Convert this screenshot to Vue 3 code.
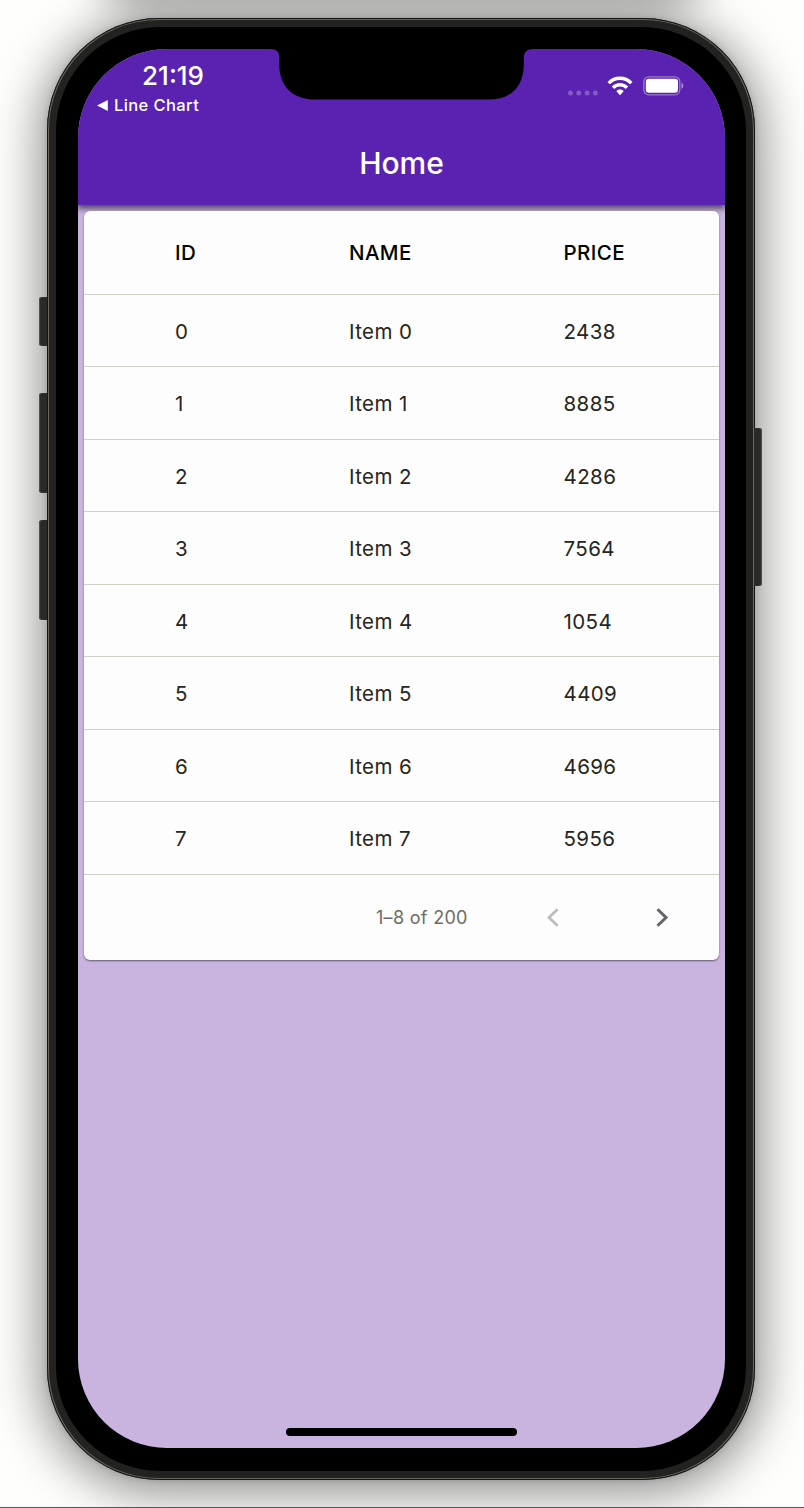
<script setup>
const rows = [2438, 8885, 4286, 7564, 1054, 4409, 4696, 5956].map((price, id) => ({
  id,
  name: `Item ${id}`,
  price,
}))
</script>

<template>
  <div class="stage">
    <div class="neighbor"></div>
    <div class="phone">
      <i class="key mute"></i>
      <i class="key up"></i>
      <i class="key down"></i>
      <i class="key power"></i>
      <div class="bezel">
        <div class="screen">
          <header class="appbar">
            <div class="status">
              <div class="clock">
                <div class="time">21:19</div>
                <div class="back">
                  <svg width="11" height="11" viewBox="0 0 11 11"><path d="M0 5.5 10.8 0V11Z" fill="#fff" /></svg>
                  <span>Line Chart</span>
                </div>
              </div>
              <div class="indicators">
                <svg class="dots" width="30" height="6" viewBox="0 0 30 6">
                  <g fill="#fff" fill-opacity=".26">
                    <circle cx="2.5" cy="3" r="2.5" /><circle cx="10.8" cy="3" r="2.5" />
                    <circle cx="19.1" cy="3" r="2.5" /><circle cx="27.4" cy="3" r="2.5" />
                  </g>
                </svg>
                <svg class="wifi" width="26" height="20" viewBox="0 0 26 20">
                  <g fill="none" stroke="#fff" stroke-width="3.5">
                    <path d="M1.7 7.1C8 .6 18 .6 24.3 7.1" />
                    <path d="M6 11.7C10 7.7 16 7.7 20 11.7" />
                  </g>
                  <path d="M9.2 15.1C11.4 13 14.6 13 16.8 15.1L13 19.2Z" fill="#fff" />
                </svg>
                <svg width="42" height="20" viewBox="0 0 42 20">
                  <rect x=".8" y=".8" width="36" height="18" rx="5" fill="none" stroke="#fff" stroke-opacity=".4" stroke-width="1.3" />
                  <rect x="2.8" y="2.8" width="32.2" height="14" rx="3" fill="#fff" />
                  <path d="M38.5 6.8C40.9 7.7 40.9 12 38.5 12.8Z" fill="#fff" fill-opacity=".5" />
                </svg>
              </div>
            </div>
            <h1>Home</h1>
            <svg class="notch" width="264" height="51" viewBox="0 0 264 51">
              <path d="M0 0C7 0 9.200 3 9.200 9V16C9.700 38 23 50.600 46 50.600H218C241 50.600 253.300 38 253.800 16V9C253.800 3 257 0 264 0Z" fill="#000" />
            </svg>
          </header>
          <main class="card">
            <div class="row head"><span>ID</span><span>NAME</span><span>PRICE</span></div>
            <div v-for="r in rows" :key="r.id" class="row item">
              <span>{{ r.id }}</span><span>{{ r.name }}</span><span>{{ r.price }}</span>
            </div>
            <div class="pager">
              <span>1–8 of 200</span>
              <svg class="prev" width="12" height="19" viewBox="0 0 12 19"><path d="M10.5 1.2 2 9.5 10.5 17.8" fill="none" stroke="#bdbdbd" stroke-width="2.8" /></svg>
              <svg class="next" width="12" height="19" viewBox="0 0 12 19"><path d="M1.5 1.2 10 9.5 1.5 17.8" fill="none" stroke="#66646a" stroke-width="3" /></svg>
            </div>
          </main>
          <div class="homebar"></div>
        </div>
      </div>
    </div>
    <div class="baseline"></div>
  </div>
</template>

<style>
body { margin: 0; background: #fdfdfd; }
</style>

<style scoped>
.stage {
  position: relative;
  width: 804px;
  height: 1508px;
  box-sizing: border-box;
  padding: 18px 49px 0 47px;
  overflow: hidden;
  background: #fefefd;
  font-family: Inter, "Liberation Sans", sans-serif;
}
.neighbor {
  position: absolute;
  left: 90px;
  right: 90px;
  top: -60px;
  height: 60px;
  border-radius: 0 0 60px 60px;
  box-shadow: 0 0 34px 8px rgba(0, 0, 0, .3);
}
.baseline {
  position: absolute;
  left: 0;
  right: 0;
  bottom: 0;
  height: 1px;
  background: #55555a;
}
.phone {
  position: relative;
  box-sizing: border-box;
  width: 708px;
  height: 1462px;
  padding: 9px;
  border-radius: 112px;
  background: #222220;
  box-shadow: inset 0 0 0 1px #151514, inset 0 0 0 2px #69675f,
    0 0 6px rgba(0, 0, 0, .15), 0 6px 48px 8px rgba(0, 0, 0, .43);
}
.key {
  position: absolute;
  left: -8px;
  width: 8px;
  background: #292928;
  border-radius: 3px 0 0 3px;
  box-shadow: inset 1px 0 1px #55555a;
}
.mute { top: 279px; height: 49px; }
.up { top: 375px; height: 100px; }
.down { top: 502px; height: 100px; }
.power {
  left: auto;
  right: -7px;
  top: 410px;
  height: 158px;
  border-radius: 0 3px 3px 0;
  box-shadow: inset -1px 0 1px #55555a;
}
.bezel {
  box-sizing: border-box;
  height: 100%;
  padding: 22px 21px 23px 22px;
  border-radius: 104px;
  background: #000;
}
.screen {
  position: relative;
  width: 647px;
  height: 1399px;
  overflow: hidden;
  border-radius: 89px;
  background: #c9b4e0;
}
.appbar {
  position: relative;
  height: 155.5px;
  color: #fff;
  background: #5a22b0;
  box-shadow: 0 2px 7px 1px rgba(0, 0, 0, .7);
}
.status {
  display: flex;
  justify-content: space-between;
  height: 98px;
}
.clock { padding: 11px 0 0 19px; }
.time {
  width: 152px;
  font-size: 26px;
  font-weight: 500;
  line-height: 31px;
  text-align: center;
  letter-spacing: 0;
}
.back {
  display: flex;
  align-items: center;
  gap: 6px;
  margin-top: 3px;
  font-size: 16.5px;
  font-weight: 450;
  line-height: 23px;
  letter-spacing: .4px;
}
.indicators {
  display: flex;
  align-items: center;
  gap: 9px;
  height: 20px;
  padding: 26.5px 40px 0 0;
}
.dots { margin-top: 14px; }
.wifi { margin-right: 1px; }
h1 {
  margin: 0;
  font-size: 30px;
  font-weight: 500;
  line-height: 32px;
  text-align: center;
}
.notch { position: absolute; left: 192px; top: 0; }
.card {
  position: relative;
  margin: 6px 6px 0;
  border-radius: 6px;
  background: #fdfdfd;
  box-shadow: 0 1px 2px rgba(0, 0, 0, .5);
}
.row {
  display: grid;
  grid-template-columns: 174px 214.5px 1fr;
  align-items: center;
  box-sizing: border-box;
  height: 72.55px;
  padding-left: 91px;
  border-bottom: 1.5px solid #cfcfca;
  color: #252522;
  font-size: 20.5px;
  letter-spacing: .4px;
}
.item { padding-top: 1.5px; }
.head {
  height: 84px;
  color: #000;
  font-weight: 500;
}
.pager {
  display: flex;
  align-items: center;
  height: 85px;
  padding-left: 292px;
  color: #6b6b68;
  font-size: 18px;
  letter-spacing: .3px;
}
.pager span { width: 171px; }
.prev { margin-right: 97px; }
.homebar {
  position: absolute;
  left: 208px;
  bottom: 12px;
  width: 231px;
  height: 8px;
  border-radius: 4px;
  background: #000;
}
</style>
